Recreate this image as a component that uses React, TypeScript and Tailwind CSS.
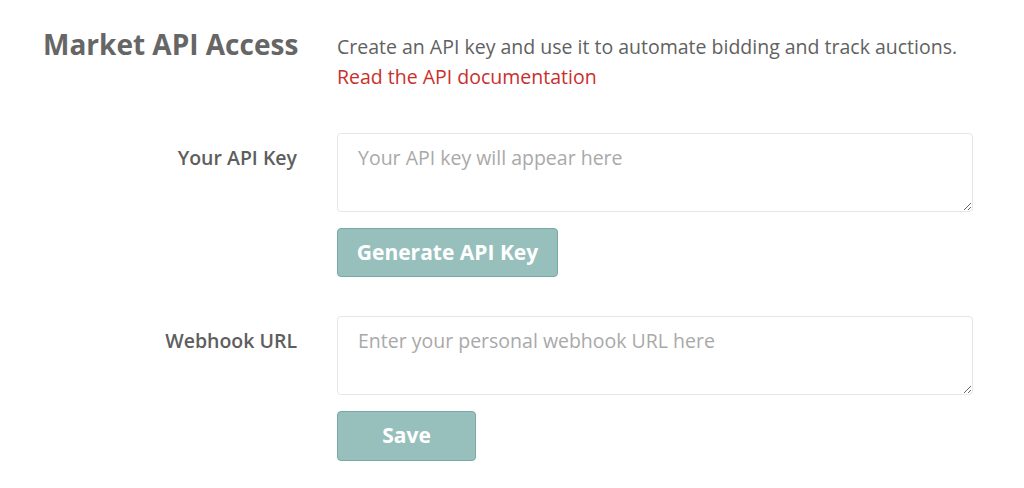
import React from "react";

export default function App() {
  return (
    <div className="w-[1024px] h-[488px] bg-white pt-[22px] pl-[43px] text-[#616161]" style={{ fontFamily: "'Open Sans', Lato, sans-serif" }}>
      <div className="grid grid-cols-[254px_636px] gap-x-[40px]">
        <h1 className="pt-[2px] text-right text-[28px] leading-[40px] font-bold text-[#666666] whitespace-nowrap">Market API Access</h1>
        <div className="pt-[10px] text-[19.5px] leading-[30px] whitespace-nowrap">
          <p>Create an API key and use it to automate bidding and track auctions.</p>
          <a href="#" className="text-[#c9302c]">Read the API documentation</a>
        </div>

        <label className="mt-[41px] text-right text-[19.5px] font-semibold leading-[26px] pt-[12px] text-[#5e5e5e] whitespace-nowrap">Your API Key</label>
        <div className="mt-[41px] flex flex-col items-start">
          <textarea
            className="w-[636px] h-[79px] rounded-[4px] border border-[#e6e6e6] px-[20px] pt-[10px] text-[19.5px] leading-[28px] placeholder:text-[#a9a9a9] outline-none"
            placeholder="Your API key will appear here"
          />
          <button className="mt-[16px] w-[221px] h-[49px] rounded-[4px] border border-[#7aa9a5] bg-[#97c0bd] text-white text-[21px] font-bold">
            Generate API Key
          </button>
        </div>

        <label className="mt-[39px] text-right text-[19.5px] font-semibold leading-[26px] pt-[12px] text-[#5e5e5e] whitespace-nowrap">Webhook URL</label>
        <div className="mt-[39px] flex flex-col items-start">
          <textarea
            className="w-[636px] h-[79px] rounded-[4px] border border-[#e6e6e6] px-[20px] pt-[10px] text-[19.5px] leading-[28px] placeholder:text-[#a9a9a9] outline-none"
            placeholder="Enter your personal webhook URL here"
          />
          <button className="mt-[16px] w-[139px] h-[50px] rounded-[4px] border border-[#7aa9a5] bg-[#97c0bd] text-white text-[21px] font-bold">
            Save
          </button>
        </div>
      </div>
    </div>
  );
}
